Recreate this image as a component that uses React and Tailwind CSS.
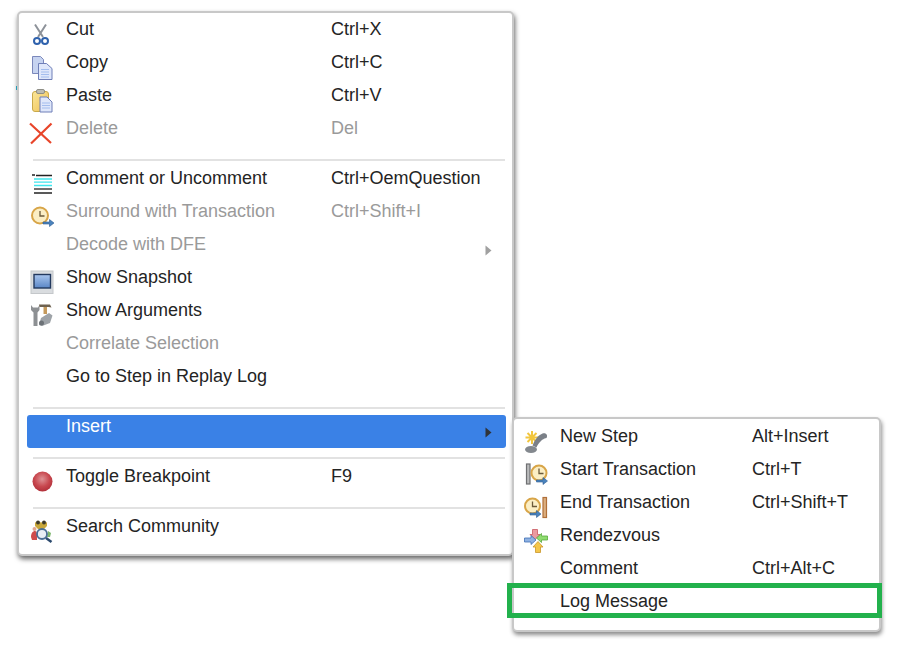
import React from 'react';

// All icons are drawn on a 24x24 grid, centred on the row
const Icon = ({ children }) => (
  <svg width="24" height="24" viewBox="0 0 24 24" className="shrink-0 overflow-visible">
    <defs>
      <linearGradient id="screen" x1="0" y1="0" x2="0" y2="1">
        <stop offset="0" stopColor="#a9c6ee" />
        <stop offset="1" stopColor="#5a86c6" />
      </linearGradient>
      <radialGradient id="ball" cx="0.48" cy="0.38" r="0.62">
        <stop offset="0" stopColor="#de9295" />
        <stop offset="0.6" stopColor="#c8484f" />
        <stop offset="1" stopColor="#b2303a" />
      </radialGradient>
      <linearGradient id="pad" x1="0" y1="0" x2="1" y2="1">
        <stop offset="0" stopColor="#fbe79a" />
        <stop offset="1" stopColor="#eec054" />
      </linearGradient>
    </defs>
    {children}
  </svg>
);

const Sheet = ({ x, y }) => (
  <g>
    <path d={`M${x + 0.5} ${y + 0.5}h7l5 5v10h-12z`} fill="#dfe7fa" stroke="#6f7fb8" />
    <path d={`M${x + 2.5} ${y + 6.5}h8M${x + 2.5} ${y + 9}h8M${x + 2.5} ${y + 11.5}h8`} stroke="#a3bdee" />
  </g>
);

const CutIcon = () => (
  <Icon>
    <path d="M6 1.500l8 12.500M17 1.500L9 14" stroke="#8d9299" strokeWidth="2" fill="none" />
    <circle cx="8" cy="18" r="3" fill="none" stroke="#2f62ad" strokeWidth="2" />
    <circle cx="16" cy="18" r="3" fill="none" stroke="#2f62ad" strokeWidth="2" />
  </Icon>
);

const CopyIcon = () => (
  <Icon>
    <path d="M3.500 0.500h8l3 3v14h-11z" fill="#c6d3f0" stroke="#7b88bb" />
    <path d="M9.500 7.500h8l5.500 5v11H9.500z" fill="#dfe7fa" stroke="#6f7fb8" />
    <path d="M12 13.500h8M12 16h8M12 18.500h8M12 21h8" stroke="#a3bdee" />
  </Icon>
);

const PasteIcon = () => (
  <Icon>
    <rect x="3.500" y="2.500" width="16" height="20" rx="2.500" fill="url(#pad)" stroke="#c9a94a" />
    <rect x="7.500" y="0.500" width="8" height="4" rx="1.500" fill="#bdbdb4" stroke="#8e8e86" />
    <Sheet x={10.500} y={7.500} />
  </Icon>
);

const DeleteIcon = () => (
  <Icon>
    <path d="M1 1.500l21 19.500M22.500 1.500L2 21.500" stroke="#e8452a" strokeWidth="2.200" fill="none" />
  </Icon>
);

const CommentIcon = () => (
  <Icon>
    <path d="M3 3h3M7 3.500h16" stroke="#222" strokeWidth="1.300" />
    <path d="M5 7h18M5 10.200h18M5 13.500h18" stroke="#3fe6ee" strokeWidth="1.300" />
    <path d="M5 17h18" stroke="#222" strokeWidth="1.300" />
    <path d="M5 21h18" stroke="#222" strokeWidth="1.500" />
  </Icon>
);

// Clock with a blue arrow, shared by the transaction icons
const Clock = ({ cx, cy, r = 7.500 }) => (
  <g>
    <circle cx={cx} cy={cy} r={r} fill="#fbeec4" stroke="#d8a548" strokeWidth="2" />
    <path d={`M${cx} ${cy - 4.500}v5h4.500`} fill="none" stroke="#6b5a3a" strokeWidth="1.300" />
  </g>
);

const Arrow = ({ x, y }) => (
  <path d={`M${x} ${y}h6.500v-2.500l4.500 3.500-4.500 3.500v-2.500h-6.500z`} fill="#4a83bd" stroke="#2c5b92" strokeWidth="0.600" />
);

const SurroundIcon = () => (
  <Icon>
    <Clock cx={11} cy={10.500} r={8} />
    <Arrow x={14} y={17} />
  </Icon>
);

const SnapshotIcon = () => (
  <Icon>
    <rect x="2" y="0" width="22" height="22.500" fill="#d9dcdf" stroke="#c4c7ca" />
    <rect x="5" y="3.500" width="16.500" height="13.500" fill="url(#screen)" stroke="#23395e" strokeWidth="1.400" />
  </Icon>
);

const ArgumentsIcon = () => (
  <Icon>
    <path d="M2 1v5l2.500 2.500V22h4V8.500L10.500 6V1L9 3.500H4z" fill="#8d9093" />
    <path d="M10 0.500h11l1.500 3-3-0.500h-9z" fill="#6f6250" />
    <path d="M14.500 3h3.500v7h-3.500z" fill="#c59a5c" />
    <path d="M10 21l2-7 8-5 3.500 2.500-2.500 7.500-8 3z" fill="#9ea3a8" />
    <circle cx="12.500" cy="19" r="2.500" fill="#6d7277" />
  </Icon>
);

const BreakpointIcon = () => (
  <Icon>
    <circle cx="13.500" cy="11.500" r="10" fill="url(#ball)" />
  </Icon>
);

const CommunityIcon = () => (
  <Icon>
    <path d="M2 17c0-4 2-6 4-6s2 3 2 6v3H3z" fill="#cf4c4c" />
    <circle cx="5.500" cy="9" r="2" fill="#e0a890" />
    <path d="M19 11l3 2-1 4h-3z" fill="#7cb56c" />
    <path d="M6 2l3 2 3-2 3 2 3-2v4l-3 3H9L6 6z" fill="#c9a83b" />
    <circle cx="9" cy="2.500" r="2" fill="#3e3a28" />
    <circle cx="15" cy="2.500" r="2" fill="#3e3a28" />
    <circle cx="13" cy="14" r="5" fill="#e8eef5" stroke="#4a6f96" strokeWidth="1.800" />
    <path d="M17 18l5.500 4" stroke="#2c4a6e" strokeWidth="2.600" />
  </Icon>
);

const NewStepIcon = () => (
  <Icon>
    <path d="M8 1v13M1.500 7.500h13M3.500 3l9 9M12.500 3l-9 9" stroke="#f2c63e" strokeWidth="2" />
    <path d="M18.500 3.500c4-1 5.500 2 4 4.500-3 1-3.500 1-5.500 3s-4 4.500-4.500 6.500l-4-2c2-5 5-10 10-12z" fill="#7b8088" />
    <ellipse cx="7" cy="19.500" rx="6" ry="3.500" fill="#83888e" />
  </Icon>
);

const StartIcon = () => (
  <Icon>
    <rect x="2.500" y="1" width="3.500" height="20" fill="#b9babb" stroke="#6f7072" strokeWidth="1.200" />
    <Clock cx={15} cy={10} />
    <Arrow x={12.500} y={17} />
  </Icon>
);

const EndIcon = () => (
  <Icon>
    <Clock cx={8.500} cy={10} />
    <Arrow x={6} y={17} />
    <rect x="19" y="1.500" width="3.500" height="20" fill="#dcae80" stroke="#b0703a" strokeWidth="1.200" />
  </Icon>
);

const RendezvousIcon = () => (
  <Icon>
    <path d="M8.500 0.500h5v5h2.500l-5 5-5-5h2.500z" fill="#eb9aa0" stroke="#c9585f" strokeWidth="0.800" />
    <path d="M0.500 9h6.500V6.500l5 4.500-5 4.500V13H0.500z" fill="#8fb2e2" stroke="#3f6fb5" strokeWidth="0.800" />
    <path d="M23.500 7h-6V4.500L12.500 9l5 4.500V11h6z" fill="#8fdc70" stroke="#58a83c" strokeWidth="0.800" />
    <path d="M11.500 23.500v-5.500H9l5-5.500 5 5.500h-2.500v5.500z" fill="#f4c64a" stroke="#c9962a" strokeWidth="0.800" />
  </Icon>
);

const Chevron = ({ muted }) => (
  <svg width="7" height="11" viewBox="0 0 7 11" className="absolute right-[14px] top-[12px]">
    <path d="M0.500 0.500L6.500 5.500L0.500 10.500z" fill={muted ? '#a0a0a0' : '#2f3338'} />
  </svg>
);

const Row = ({ icon, label, keys, muted, active, more }) => {
  const color = active ? 'text-white' : muted ? 'text-[#9a9a9a]' : 'text-[#242424]';
  return (
    <div className={`relative flex h-[33px] items-start rounded-[3px] ${active ? 'bg-[#3a81e6]' : ''}`}>
      <div className="flex h-[33px] w-[39px] items-center pl-[2px]">{icon}</div>
      <span className={`w-[265px] shrink-0 pt-[1px] leading-[20px] ${color}`}>{label}</span>
      {keys && <span className={`pt-[1px] leading-[20px] ${color}`}>{keys}</span>}
      {more && <Chevron muted={muted} />}
    </div>
  );
};

const Sep = () => <div className="mb-[6px] ml-[6px] mt-[9px] h-[2px] w-[472px] bg-[#e2e2e2]" />;

const SubRow = ({ icon, label, keys }) => (
  <div className="flex h-[33px] items-start">
    <div className="flex h-[33px] w-[36px] items-center">{icon}</div>
    <span className="w-[192px] shrink-0 pt-[1px] leading-[20px] text-[#242424]">{label}</span>
    {keys && <span className="pt-[1px] leading-[20px] text-[#242424]">{keys}</span>}
  </div>
);

export default function App() {
  return (
    <div className="h-[651px] w-[914px] overflow-hidden bg-white pl-[17px] pt-[11px] font-['Liberation_Sans',Arial,sans-serif] text-[18px]">
      <div className="relative h-[545px] w-[497px] rounded-[5px] border-2 border-[#c8c8c8] bg-white pl-[8px] pr-[6px] pt-[5px] shadow-[1px_3px_5px_rgba(0,0,0,0.600)]">
        <Row icon={<CutIcon />} label="Cut" keys="Ctrl+X" />
        <Row icon={<CopyIcon />} label="Copy" keys="Ctrl+C" />
        <Row icon={<PasteIcon />} label="Paste" keys="Ctrl+V" />
        <Row icon={<DeleteIcon />} label="Delete" keys="Del" muted />
        <Sep />
        <Row icon={<CommentIcon />} label="Comment or Uncomment" keys="Ctrl+OemQuestion" />
        <Row icon={<SurroundIcon />} label="Surround with Transaction" keys="Ctrl+Shift+I" muted />
        <Row label="Decode with DFE" muted more />
        <Row icon={<SnapshotIcon />} label="Show Snapshot" />
        <Row icon={<ArgumentsIcon />} label="Show Arguments" />
        <Row label="Correlate Selection" muted />
        <Row label="Go to Step in Replay Log" />
        <Sep />
        <Row label="Insert" active more />
        <Sep />
        <Row icon={<BreakpointIcon />} label="Toggle Breakpoint" keys="F9" />
        <Sep />
        <Row icon={<CommunityIcon />} label="Search Community" />

        {/* Stray teal speck just left of the menu edge */}
        <div className="absolute left-[-3px] top-[73px] h-[4px] w-[1px] bg-[#2a9db5]" />

        {/* Submenu opened from Insert */}
        <div className="absolute left-[493px] top-[404px] h-[215px] w-[369px] rounded-[5px] border-2 border-[#c8c8c8] bg-white pl-[10px] pt-[6px] shadow-[1px_3px_4px_rgba(0,0,0,0.450)]">
          <SubRow icon={<NewStepIcon />} label="New Step" keys="Alt+Insert" />
          <SubRow icon={<StartIcon />} label="Start Transaction" keys="Ctrl+T" />
          <SubRow icon={<EndIcon />} label="End Transaction" keys="Ctrl+Shift+T" />
          <SubRow icon={<RendezvousIcon />} label="Rendezvous" />
          <SubRow label="Comment" keys="Ctrl+Alt+C" />
          <SubRow label="Log Message" />
          {/* Green annotation round the last row */}
          <div className="absolute left-[-7px] top-[164px] h-[35px] w-[375px] border-[5px] border-[#22b14c]" />
        </div>
      </div>
    </div>
  );
}
